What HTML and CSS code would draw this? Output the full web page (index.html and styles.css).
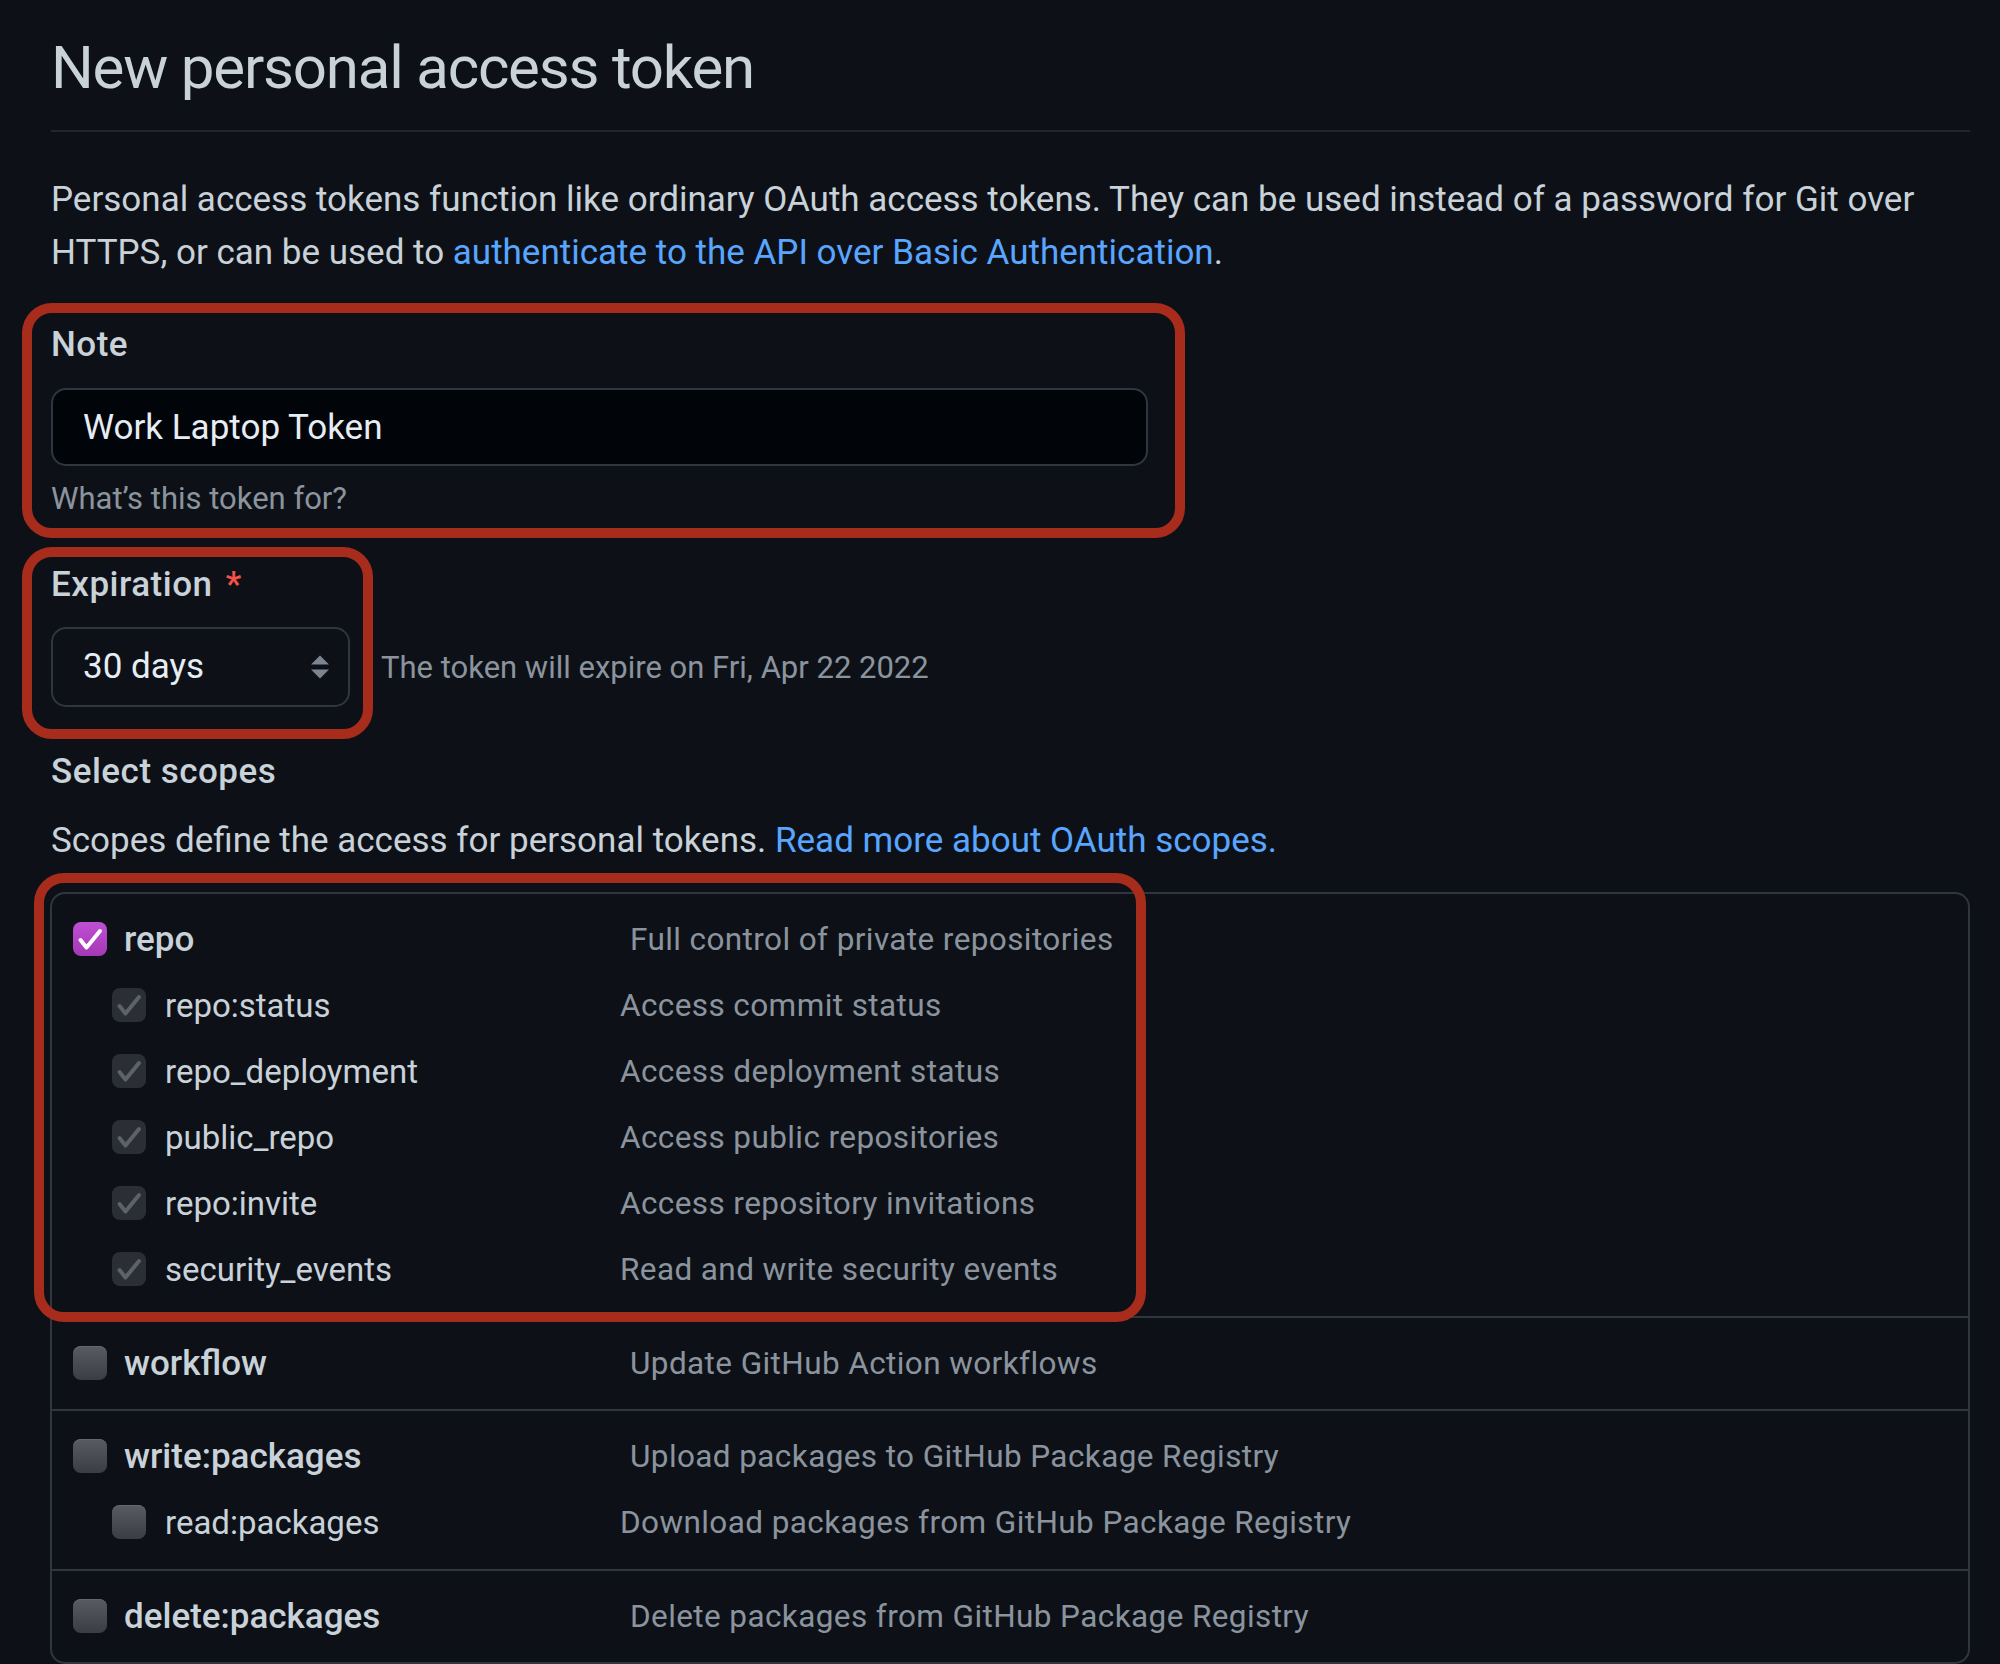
FILE: index.html
```html
<!DOCTYPE html>
<html lang="en">
<head>
<meta charset="utf-8">
<title>New personal access token</title>
<link rel="stylesheet" href="styles.css">
</head>
<body>
<div class="page">
  <div class="subhead">
    <h2 class="subhead-heading">New personal access token</h2>
  </div>
  <p class="intro">Personal access tokens function like ordinary OAuth access tokens. They can be used instead of a password for Git over HTTPS, or can be used to <a href="#">authenticate to the API over Basic Authentication</a>.</p>

  <div class="form-group">
    <label class="label" for="note">Note</label>
    <input class="input" id="note" type="text" value="Work Laptop Token">
    <p class="note">What’s this token for?</p>
  </div>

  <div class="form-group exp-group">
    <label class="label">Expiration <span class="req">*</span></label>
    <div class="exp-row">
      <div class="select">
        <span>30 days</span>
        <svg class="select-arrows" width="18" height="24" viewBox="0 0 18 24"><polygon points="0,9.5 9,0.5 18,9.5" fill="#7d8590"/><polygon points="0,14.5 18,14.5 9,23.5" fill="#7d8590"/></svg>
      </div>
      <span class="exp-note">The token will expire on Fri, Apr 22 2022</span>
    </div>
  </div>

  <div class="label scopes-title">Select scopes</div>
  <p class="scopes-desc">Scopes define the access for personal tokens. <a href="#">Read more about OAuth scopes.</a></p>

  <div class="scope-box">
    <div class="scope-group">
      <div class="row">
        <span class="cb cb-on"><svg width="34" height="34" viewBox="0 0 34 34"><polyline points="7.5,18 13.5,25.5 27,9" fill="none" stroke="#fff" stroke-width="4" stroke-linecap="round" stroke-linejoin="round"/></svg></span>
        <span class="name name-top">repo</span>
        <span class="desc">Full control of private repositories</span>
      </div>
      <div class="row sub">
        <span class="cb cb-dis"><svg width="34" height="34" viewBox="0 0 34 34"><polyline points="7.5,18 13.5,25.5 27,9" fill="none" stroke="#5d6168" stroke-width="4" stroke-linecap="round" stroke-linejoin="round"/></svg></span>
        <span class="name name-sub">repo:status</span>
        <span class="desc">Access commit status</span>
      </div>
      <div class="row sub">
        <span class="cb cb-dis"><svg width="34" height="34" viewBox="0 0 34 34"><polyline points="7.5,18 13.5,25.5 27,9" fill="none" stroke="#5d6168" stroke-width="4" stroke-linecap="round" stroke-linejoin="round"/></svg></span>
        <span class="name name-sub">repo_deployment</span>
        <span class="desc">Access deployment status</span>
      </div>
      <div class="row sub">
        <span class="cb cb-dis"><svg width="34" height="34" viewBox="0 0 34 34"><polyline points="7.5,18 13.5,25.5 27,9" fill="none" stroke="#5d6168" stroke-width="4" stroke-linecap="round" stroke-linejoin="round"/></svg></span>
        <span class="name name-sub">public_repo</span>
        <span class="desc">Access public repositories</span>
      </div>
      <div class="row sub">
        <span class="cb cb-dis"><svg width="34" height="34" viewBox="0 0 34 34"><polyline points="7.5,18 13.5,25.5 27,9" fill="none" stroke="#5d6168" stroke-width="4" stroke-linecap="round" stroke-linejoin="round"/></svg></span>
        <span class="name name-sub">repo:invite</span>
        <span class="desc">Access repository invitations</span>
      </div>
      <div class="row sub">
        <span class="cb cb-dis"><svg width="34" height="34" viewBox="0 0 34 34"><polyline points="7.5,18 13.5,25.5 27,9" fill="none" stroke="#5d6168" stroke-width="4" stroke-linecap="round" stroke-linejoin="round"/></svg></span>
        <span class="name name-sub">security_events</span>
        <span class="desc">Read and write security events</span>
      </div>
    </div>

    <div class="scope-group">
      <div class="row">
        <span class="cb cb-off"></span>
        <span class="name name-top">workflow</span>
        <span class="desc">Update GitHub Action workflows</span>
      </div>
    </div>

    <div class="scope-group">
      <div class="row">
        <span class="cb cb-off"></span>
        <span class="name name-top">write:packages</span>
        <span class="desc">Upload packages to GitHub Package Registry</span>
      </div>
      <div class="row sub">
        <span class="cb cb-off"></span>
        <span class="name name-sub">read:packages</span>
        <span class="desc">Download packages from GitHub Package Registry</span>
      </div>
    </div>

    <div class="scope-group">
      <div class="row">
        <span class="cb cb-off"></span>
        <span class="name name-top">delete:packages</span>
        <span class="desc">Delete packages from GitHub Package Registry</span>
      </div>
    </div>
  </div>
</div>

<div class="annot annot-note"></div>
<div class="annot annot-exp"></div>
<div class="annot annot-scopes"></div>
</body>
</html>
```

FILE: styles.css
```css
* { box-sizing: border-box; }

html, body {
  margin: 0;
  background: #0d1117;
}

body {
  position: relative;
  width: 2000px;
  height: 1664px;
  overflow: hidden;
  font-family: Roboto, "Liberation Sans", sans-serif;
  font-size: 35px;
  line-height: 52.5px;
  color: #c9d1d9;
}

.page {
  padding: 30px 30px 0 51px;
}

a {
  color: #58a6ff;
  text-decoration: none;
}

.subhead {
  border-bottom: 2px solid #21262d;
  padding-bottom: 25px;
}

.subhead-heading {
  margin: 0;
  font-size: 60px;
  line-height: 75px;
  font-weight: 400;
  letter-spacing: -1.2px;
  color: #c9d1d9;
}

.intro {
  margin: 42px 0 0;
}

.form-group {
  margin-top: 40px;
}

.exp-group {
  margin-top: 38px;
}

.label {
  display: block;
  font-weight: 500;
  letter-spacing: 0.5px;
  color: #c9d1d9;
}

.req {
  color: #f85149;
  margin-left: 4px;
}

.input {
  display: block;
  margin-top: 16.5px;
  width: 1097px;
  height: 78px;
  padding: 0 30px;
  border: 2px solid #30363d;
  border-radius: 15px;
  background: #010409;
  color: #e6edf3;
  font-family: inherit;
  font-size: 35px;
  outline: none;
}

.note {
  margin: 10px 0 0;
  font-size: 31px;
  line-height: 45px;
  color: #8b949e;
}

.exp-row {
  margin-top: 15.5px;
  display: flex;
  align-items: center;
  gap: 31px;
}

.select {
  width: 299px;
  height: 80px;
  border: 2px solid #30363d;
  border-radius: 15px;
  background: #0d1117;
  padding: 0 19px 0 30px;
  display: flex;
  align-items: center;
  justify-content: space-between;
  color: #e6edf3;
}

.select-arrows {
  display: block;
}

.exp-note {
  font-size: 31px;
  line-height: 45px;
  color: #8b949e;
}

.scopes-title {
  margin-top: 39px;
}

.scopes-desc {
  margin: 16.5px 0 0;
}

.scope-box {
  margin-top: 24.5px;
  margin-left: -1px;
  border: 2px solid #30363d;
  border-radius: 15px;
}

.scope-group {
  padding: 19px 0 20px 21px;
}

.scope-group + .scope-group {
  border-top: 2px solid #30363d;
}

.row {
  display: flex;
  align-items: center;
  height: 52.5px;
}

.row + .row {
  margin-top: 13.5px;
}

.row.sub {
  padding-left: 39px;
}

.cb {
  flex: none;
  width: 34px;
  height: 34px;
  border-radius: 8px;
  display: flex;
  align-items: center;
  justify-content: center;
}

.cb svg { display: block; }

.cb-on {
  background: linear-gradient(#c04fd4, #a338b5);
}

.cb-dis {
  background: #2b2f35;
}

.cb-off {
  background: linear-gradient(#585b61, #3a3d43);
  box-shadow: inset 0 1px 0 #63666c;
}

.name {
  flex: none;
  color: #c9d1d9;
  padding-top: 2px;
}

.name-top {
  margin-left: 17px;
  width: 506px;
  font-weight: 500;
}

.name-sub {
  margin-left: 19px;
  width: 455px;
  font-size: 33px;
}

.desc {
  font-size: 31.5px;
  letter-spacing: 0.4px;
  color: #8b949e;
  white-space: nowrap;
  padding-top: 2px;
}

.annot {
  position: absolute;
  border: 10px solid #a82c1c;
  border-radius: 30px;
  pointer-events: none;
}

.annot-note {
  left: 22px;
  top: 303px;
  width: 1163px;
  height: 235px;
}

.annot-exp {
  left: 22px;
  top: 547px;
  width: 351px;
  height: 192px;
}

.annot-scopes {
  left: 34px;
  top: 873px;
  width: 1112px;
  height: 449px;
}
```
